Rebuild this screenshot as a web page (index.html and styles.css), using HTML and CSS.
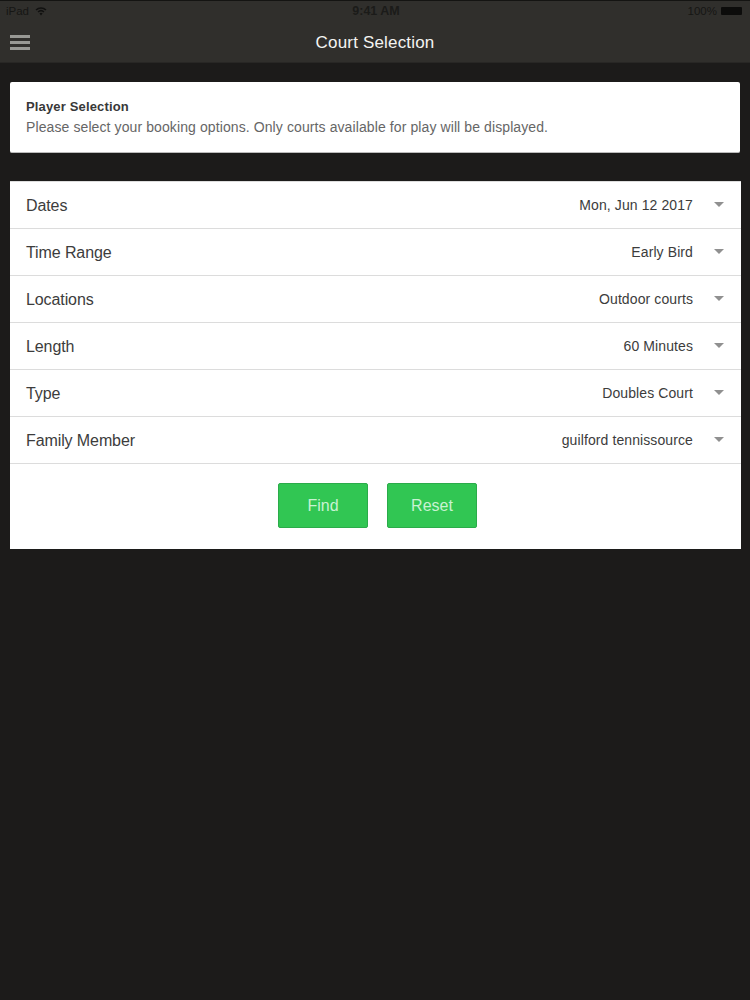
FILE: index.html
```html
<!DOCTYPE html>
<html lang="en">

<head>
    <meta charset="UTF-8">
    <title>Court Selection</title>
    <link rel="stylesheet" href="styles.css">
</head>

<body>

    <div class="top">
        <div class="status">
            <div class="status-left">
                <span>iPad</span>
                <svg class="wifi" width="12" height="10" viewBox="0 0 12 10">
                    <path d="M0.5 3.4 A8 8 0 0 1 11.5 3.4 L10.4 4.6 A6.4 6.4 0 0 0 1.6 4.6 Z" />
                    <path d="M2.5 5.4 A5.2 5.2 0 0 1 9.5 5.4 L8.4 6.6 A3.6 3.6 0 0 0 3.6 6.6 Z" />
                    <path d="M4.4 7.4 A2.4 2.4 0 0 1 7.6 7.4 L6 9.4 Z" />
                </svg>
            </div>
            <div class="status-time">9:41 AM</div>
            <div class="status-right">
                <span>100%</span>
                <div class="battery"></div>
            </div>
        </div>
        <div class="navbar">
            <div class="menu-icon">
                <span></span>
                <span></span>
                <span></span>
            </div>
            <h1>Court Selection</h1>
        </div>
    </div>

    <div class="card intro">
        <h2>Player Selection</h2>
        <p>Please select your booking options. Only courts available for play will be displayed.</p>
    </div>

    <div class="card options">
        <div class="row">
            <span class="label">Dates</span>
            <span class="value">Mon, Jun 12 2017</span>
            <span class="caret"></span>
        </div>
        <div class="row">
            <span class="label">Time Range</span>
            <span class="value">Early Bird</span>
            <span class="caret"></span>
        </div>
        <div class="row">
            <span class="label">Locations</span>
            <span class="value">Outdoor courts</span>
            <span class="caret"></span>
        </div>
        <div class="row">
            <span class="label">Length</span>
            <span class="value">60 Minutes</span>
            <span class="caret"></span>
        </div>
        <div class="row">
            <span class="label">Type</span>
            <span class="value">Doubles Court</span>
            <span class="caret"></span>
        </div>
        <div class="row">
            <span class="label">Family Member</span>
            <span class="value">guilford tennissource</span>
            <span class="caret"></span>
        </div>
        <div class="buttons">
            <button type="button">Find</button>
            <button type="button">Reset</button>
        </div>
    </div>

</body>

</html>
```

FILE: styles.css
```css
* {
    box-sizing: border-box;
    font-family: 'Liberation Sans', Arial, sans-serif;
}

body {
    margin: 0;
    height: 1000px;
    overflow: hidden;
    background: #1c1b1a;
}

.top {
    height: 63px;
    background: #302f2c;
    border-top: 1px solid #141412;
    border-bottom: 1px solid #282725;
}

.status {
    display: flex;
    align-items: center;
    justify-content: space-between;
    height: 19px;
    padding: 0 8px 0 6px;
    font-size: 11.5px;
    color: #161614;
}

.status > div {
    flex: 1;
}

.status-left {
    display: flex;
    align-items: center;
    gap: 6px;
}

.wifi {
    fill: #111110;
}

.status-time {
    padding-left: 4px;
    text-align: center;
    font-size: 12.5px;
    font-weight: bold;
    color: #1b1b19;
}

.status-right {
    display: flex;
    align-items: center;
    justify-content: flex-end;
    gap: 4px;
}

.battery {
    width: 21px;
    height: 8px;
    background: #0c0c0b;
    border-radius: 1px;
}

.navbar {
    display: flex;
    align-items: center;
    justify-content: center;
    position: relative;
    height: 42px;
    padding-top: 3px;
}

.navbar h1 {
    margin: 0;
    font-size: 17px;
    font-weight: normal;
    letter-spacing: 0.01em;
    color: #f4f4f2;
}

.menu-icon {
    position: absolute;
    left: 10px;
    top: 15px;
    width: 20px;
    display: flex;
    flex-direction: column;
    gap: 3.5px;
}

.menu-icon span {
    height: 2.5px;
    background: #989894;
}

.card {
    margin-left: 10px;
    background: #fff;
}

.intro {
    width: 730px;
    height: 71px;
    margin-top: 19px;
    padding: 17px 16px 0;
    border-radius: 2px;
    border-bottom: 1px solid #bbb;
}

.intro h2 {
    margin: 0 0 6px;
    font-size: 13px;
    line-height: 15px;
    letter-spacing: 0.15px;
    color: #383838;
}

.intro p {
    margin: 0;
    font-size: 14px;
    line-height: 15px;
    letter-spacing: 0.1px;
    color: #666;
}

.options {
    width: 731px;
    height: 368px;
    margin-top: 28px;
    border-top: 1px solid #ddd;
}

.row {
    display: flex;
    align-items: center;
    height: 47px;
    padding: 0 16px;
    border-bottom: 1px solid #dcdcdc;
}

.label {
    flex: 1;
    margin-top: 2px;
    font-size: 16px;
    letter-spacing: -0.1px;
    color: #3c3c3c;
}

.value {
    font-size: 14px;
    letter-spacing: 0.1px;
    color: #3c3c3c;
}

.caret {
    width: 0;
    height: 0;
    margin: 0 1px 1px 21px;
    border-left: 5px solid transparent;
    border-right: 5px solid transparent;
    border-top: 5px solid #909090;
}

.buttons {
    display: flex;
    justify-content: center;
    gap: 19px;
    margin-top: 19px;
    padding-left: 4px;
}

button {
    width: 90px;
    height: 45px;
    padding: 0;
    background: #31c653;
    border: 1px solid #2bab4a;
    border-radius: 2px;
    font-size: 16px;
    color: #c8f2d2;
}
```
